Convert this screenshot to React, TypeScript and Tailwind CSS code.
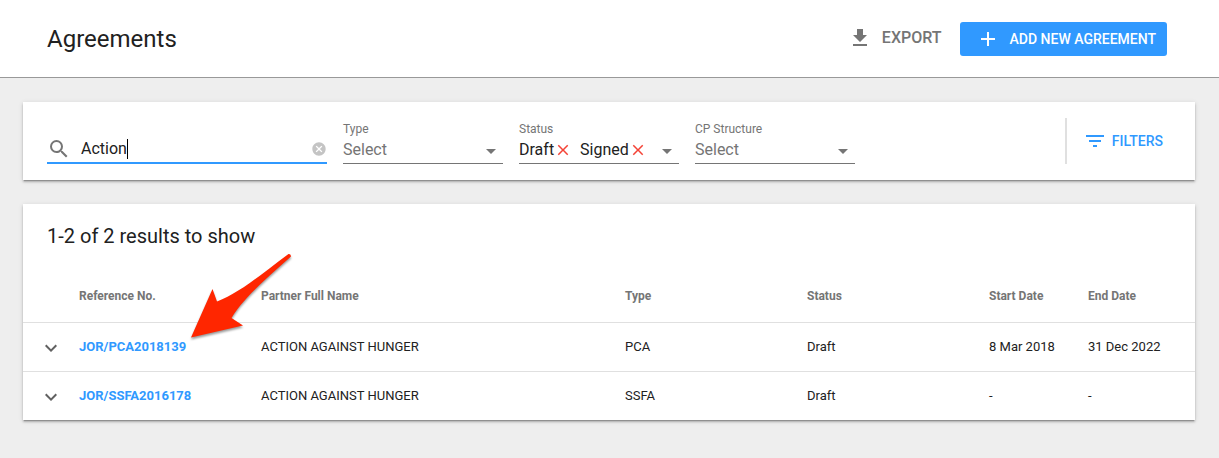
import React from 'react';
import { MdAdd, MdCancel, MdClose, MdExpandMore, MdFileDownload, MdFilterList, MdSearch, MdArrowDropDown } from 'react-icons/md';

interface Agreement {
  reference: string;
  partner: string;
  type: string;
  status: string;
  start: string;
  end: string;
}

const agreements: Agreement[] = [
  {
    reference: 'JOR/PCA2018139',
    partner: 'ACTION AGAINST HUNGER',
    type: 'PCA',
    status: 'Draft',
    start: '8 Mar 2018',
    end: '31 Dec 2022',
  },
  {
    reference: 'JOR/SSFA2016178',
    partner: 'ACTION AGAINST HUNGER',
    type: 'SSFA',
    status: 'Draft',
    start: '-',
    end: '-',
  },
];

const columns = ['Reference No.', 'Partner Full Name', 'Type', 'Status', 'Start Date', 'End Date'];

const cardClass = 'bg-white shadow-[0_2px_2px_0_rgba(0,0,0,0.2),0_1px_5px_0_rgba(0,0,0,0.12),0_2px_1px_-1px_rgba(0,0,0,0.2)]';

const SelectFilter: React.FC<{ id: string; label: string }> = ({ id, label }) => (
  <div className="w-40">
    <label htmlFor={id} className="block text-xs leading-[22px] text-[#757575]">
      {label}
    </label>
    <div className="relative h-6 border-b border-[#757575] pb-[3px]">
      <select id={id} className="block h-5 w-full appearance-none bg-transparent text-base leading-5 text-[#757575] outline-none">
        <option>Select</option>
      </select>
      <MdArrowDropDown className="pointer-events-none absolute right-0 bottom-0 h-6 w-6 text-[#757575]" />
    </div>
  </div>
);

const StatusFilter: React.FC = () => (
  <div className="w-40" role="group" aria-labelledby="status-label">
    <div id="status-label" className="text-xs leading-[22px] text-[#757575]">
      Status
    </div>
    <div className="relative flex h-6 items-center border-b border-[#757575] pb-[3px] text-base leading-5">
      {['Draft', 'Signed'].map((status) => (
        <span key={status} className="mr-2 flex items-center">
          {status}
          <button aria-label={`Remove ${status}`} className="text-[#f44336]">
            <MdClose className="h-[18px] w-[18px]" />
          </button>
        </span>
      ))}
      <button aria-label="Open status list" className="absolute right-0 bottom-0 text-[#757575]">
        <MdArrowDropDown className="h-6 w-6" />
      </button>
    </div>
  </div>
);

const App: React.FC = () => {
  return (
    <div className="min-h-screen bg-[#eeeeee] font-['Roboto',sans-serif] text-[#212121]">
      {/* Header */}
      <header className="flex h-[78px] items-center justify-between border-b border-[#999999] bg-white pl-[47px] pr-[52px]">
        <h1 className="text-2xl">Agreements</h1>
        <div className="flex items-center">
          <button className="mr-[18px] flex items-center gap-2.5 pb-0.5 text-base font-medium text-[#757575]">
            <MdFileDownload className="h-6 w-6" />
            EXPORT
          </button>
          <button className="flex h-[34px] items-center gap-2.5 rounded-[3px] bg-[#3099ff] pl-4 pr-[11px] text-sm font-medium text-white">
            <MdAdd className="h-6 w-6" />
            ADD NEW AGREEMENT
          </button>
        </div>
      </header>

      <main className="space-y-6 py-6 pl-[23px] pr-6">
        {/* Filters */}
        <section className={`flex items-end gap-4 py-4 pl-6 pr-8 ${cardClass}`}>
          <div className="flex h-8 w-[280px] items-center border-b-2 border-[#3099ff] pt-1 text-base">
            <MdSearch className="mr-2.5 h-6 w-6 text-[#757575]" />
            <input
              type="text"
              aria-label="Search"
              defaultValue="Action"
              className="field-sizing-content bg-transparent outline-none"
            />
            <span className="h-5 w-px bg-black" />
            <button aria-label="Clear search" className="ml-auto text-[#c4c4c4]">
              <MdCancel className="h-4 w-4" />
            </button>
          </div>
          <SelectFilter id="type-filter" label="Type" />
          <StatusFilter />
          <SelectFilter id="structure-filter" label="CP Structure" />
          <div className="ml-auto flex h-[46px] items-center border-l-2 border-[#e0e0e0] pl-4">
            <button className="flex items-center gap-[5px] text-sm font-medium text-[#3099ff]">
              <MdFilterList className="h-6 w-6" />
              FILTERS
            </button>
          </div>
        </section>

        {/* Results */}
        <section className={`relative ${cardClass}`}>
          <h2 className="flex h-16 items-center px-6 text-xl">1-2 of 2 results to show</h2>
          <table className="w-full table-fixed border-collapse text-left">
            <colgroup>
              <col className="w-14" />
              <col className="w-[182px]" />
              <col className="w-[364px]" />
              <col className="w-[182px]" />
              <col className="w-[182px]" />
              <col className="w-[99px]" />
              <col className="w-[107px]" />
            </colgroup>
            <thead>
              <tr className="h-[54px] border-b border-[#e0e0e0] text-xs text-[#757575]">
                <td />
                {columns.map((column) => (
                  <th key={column} className="pt-[3px] font-bold">
                    {column}
                  </th>
                ))}
              </tr>
            </thead>
            <tbody>
              {agreements.map((row) => (
                <tr key={row.reference} className="h-[49px] border-b border-[#e0e0e0] text-[13px] last:border-b-0">
                  <td className="pl-4 pt-0.5">
                    <button aria-label={`Expand ${row.reference}`} className="block text-[#616161]">
                      <MdExpandMore className="h-6 w-6" />
                    </button>
                  </td>
                  <td>
                    <a href="#" className="font-bold text-[#3099ff]">
                      {row.reference}
                    </a>
                  </td>
                  <td>{row.partner}</td>
                  <td>{row.type}</td>
                  <td>{row.status}</td>
                  <td>{row.start}</td>
                  <td>{row.end}</td>
                </tr>
              ))}
            </tbody>
          </table>

          {/* Arrow pointing at the first reference number */}
          <svg
            viewBox="0 0 104 88"
            aria-hidden="true"
            className="pointer-events-none absolute left-[166px] top-[48px] h-[88px] w-[104px] drop-shadow-[0_2px_1px_rgba(0,0,0,0.4)]"
          >
            <path
              d="M2 85.5 L23.5 37 L28 49.5 C51 41 75 20 99.5 2 Q102 1.5 102 4.5 C79 25 55 45 42.5 66 L54 73.5 Z"
              fill="#ff2600"
            />
          </svg>
        </section>
      </main>
    </div>
  );
};

export default App;
